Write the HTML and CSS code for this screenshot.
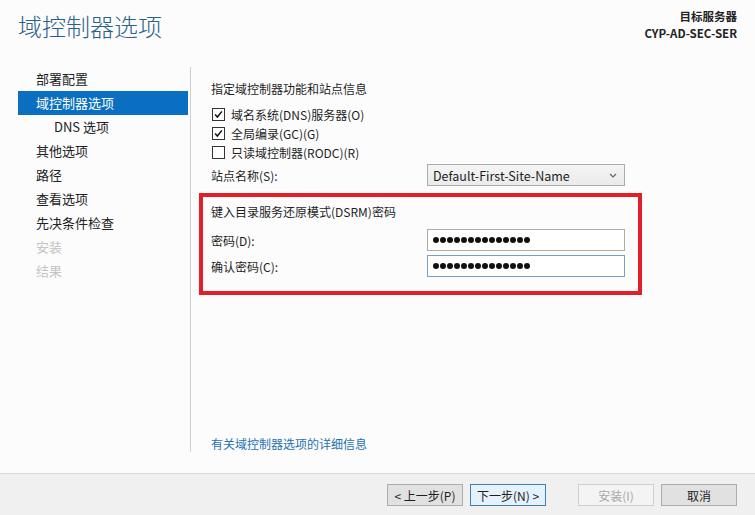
FILE: index.html
```html
<!DOCTYPE html>
<html lang="zh-CN">
<head>
<meta charset="utf-8">
<title>域控制器选项</title>
<link rel="stylesheet" href="styles.css">
</head>
<body>
<div class="wizard">
  <header class="wizard-header">
    <h1 class="wizard-title">域控制器选项</h1>
    <div class="target">
      <div class="target-label">目标服务器</div>
      <div class="target-name">CYP-AD-SEC-SER</div>
    </div>
  </header>

  <div class="wizard-main">
    <nav class="steps">
      <div class="step">部署配置</div>
      <div class="step active">域控制器选项</div>
      <div class="step sub">DNS 选项</div>
      <div class="step">其他选项</div>
      <div class="step">路径</div>
      <div class="step">查看选项</div>
      <div class="step">先决条件检查</div>
      <div class="step disabled">安装</div>
      <div class="step disabled">结果</div>
    </nav>

    <section class="pane">
      <div class="pane-heading">指定域控制器功能和站点信息</div>
      <div class="checks">
        <label class="check"><span class="box checked"><svg viewBox="0 0 13 13"><polyline points="2.5,6.5 5.2,9.5 10.5,2.8"/></svg></span>域名系统(DNS)服务器(O)</label>
        <label class="check"><span class="box checked"><svg viewBox="0 0 13 13"><polyline points="2.5,6.5 5.2,9.5 10.5,2.8"/></svg></span>全局编录(GC)(G)</label>
        <label class="check"><span class="box"></span>只读域控制器(RODC)(R)</label>
      </div>
      <div class="field site">
        <span class="field-label">站点名称(S):</span>
        <div class="select">
          <span>Default-First-Site-Name</span>
          <svg class="chev" viewBox="0 0 8 5"><polyline points="1,1 4,4 7,1"/></svg>
        </div>
      </div>

      <div class="dsrm">
        <div class="dsrm-heading">键入目录服务还原模式(DSRM)密码</div>
        <div class="field">
          <span class="field-label">密码(D):</span>
          <div class="pwd"><i></i><i></i><i></i><i></i><i></i><i></i><i></i><i></i><i></i><i></i><i></i><i></i><i></i><i></i></div>
        </div>
        <div class="field">
          <span class="field-label">确认密码(C):</span>
          <div class="pwd focus"><i></i><i></i><i></i><i></i><i></i><i></i><i></i><i></i><i></i><i></i><i></i><i></i><i></i><i></i></div>
        </div>
      </div>

      <a class="more" href="#">有关域控制器选项的详细信息</a>
    </section>
  </div>

  <footer class="wizard-footer">
    <button class="btn">&lt; 上一步(P)</button>
    <button class="btn primary">下一步(N) &gt;</button>
    <button class="btn disabled gap">安装(I)</button>
    <button class="btn cancel">取消</button>
  </footer>
</div>
</body>
</html>
```

FILE: styles.css
```css
* { box-sizing: border-box; }

html, body {
  margin: 0;
  padding: 0;
}

body {
  font-family: "Noto Sans CJK SC", "Noto Sans", sans-serif;
  font-size: 12px;
  color: #1e1e1e;
  background: #fcfcfc;
}

.wizard {
  width: 755px;
  height: 515px;
  display: flex;
  flex-direction: column;
}

/* header */
.wizard-header {
  height: 67px;
  display: flex;
  justify-content: space-between;
  padding: 0 18px;
}

.wizard-title {
  margin: 10px 0 0;
  font-size: 24px;
  line-height: 32px;
  font-weight: 300;
  color: #2a6189;
}

.target {
  margin-top: 8px;
  text-align: right;
  font-weight: bold;
  font-size: 11.5px;
  color: #222;
  display: flex;
  flex-direction: column;
}

.target-label,
.target-name {
  height: 17px;
  line-height: 17px;
}

/* main area */
.wizard-main {
  flex: 1;
  display: flex;
  padding-bottom: 21px;
  min-height: 0;
}

.steps {
  width: 170px;
  margin: 0 2px 0 18px;
  font-size: 13px;
}

.step {
  height: 24px;
  line-height: 24px;
  padding-left: 18px;
  color: #222;
}

.step.active {
  background: #0a6fc0;
  color: #fff;
}

.step.sub { padding-left: 36px; }

.step.disabled { color: #c4c4c4; }

.pane {
  flex: 1;
  border-left: 1px solid #cfcfcf;
  padding-left: 20px;
  display: flex;
  flex-direction: column;
}

.pane-heading {
  margin-top: 14px;
  line-height: 16px;
}

.checks {
  margin-top: 8px;
  display: flex;
  flex-direction: column;
}

.check {
  height: 19px;
  display: flex;
  align-items: center;
  gap: 6px;
}

.box {
  width: 13px;
  height: 13px;
  border: 1px solid #333;
  background: #fff;
  margin-left: 1px;
  display: flex;
}

.box svg {
  width: 11px;
  height: 11px;
  fill: none;
  stroke: #111;
  stroke-width: 1.8;
}

.field {
  display: flex;
  align-items: center;
}

.field-label {
  width: 216px;
  flex: none;
}

.site { margin-top: 2px; }

.select {
  width: 198px;
  height: 22px;
  border: 1px solid #acacac;
  background: linear-gradient(#f4f4f4, #eaeaea);
  display: flex;
  align-items: center;
  justify-content: space-between;
  padding: 0 7px 0 5px;
  font-size: 12.5px;
}

.chev {
  width: 8px;
  height: 5px;
  fill: none;
  stroke: #666;
  stroke-width: 1.2;
}

/* DSRM password group, outlined in red */
.dsrm {
  margin: 7px 0 0 -12px;
  width: 443px;
  border: 4px solid #e21f26;
  padding: 7px 13px 14px 8px;
}

.dsrm-heading {
  line-height: 16px;
  margin-bottom: 9px;
}

.dsrm .field + .field { margin-top: 4px; }

.pwd {
  width: 198px;
  height: 22px;
  border: 1px solid #ababab;
  background: #fff;
  display: flex;
  align-items: center;
  gap: 1px;
  padding-left: 5px;
}

.pwd.focus { border-color: #7a9fc2; }

.pwd i {
  width: 6px;
  height: 6px;
  border-radius: 50%;
  background: #111;
}

.more {
  margin-top: auto;
  line-height: 16px;
  color: #1f72b0;
  text-decoration: none;
}

/* footer buttons */
.wizard-footer {
  height: 42px;
  border-top: 1px solid #d9d9d9;
  background: #f0f0f0;
  display: flex;
  justify-content: flex-end;
  align-items: flex-start;
  padding: 10px 18px 0 0;
  gap: 7px;
}

.btn {
  width: 76px;
  height: 22px;
  border: 1px solid #adadad;
  background: #e1e1e1;
  font-family: inherit;
  font-size: 12px;
  color: #1e1e1e;
  padding: 0;
}

.btn.primary {
  border-color: #3c7fb1;
  background: #e5f1fb;
}

.btn.disabled {
  border-color: #cfcfcf;
  background: #f4f4f4;
  color: #a8a8a8;
}

.btn.gap { margin-left: 25px; }
```
